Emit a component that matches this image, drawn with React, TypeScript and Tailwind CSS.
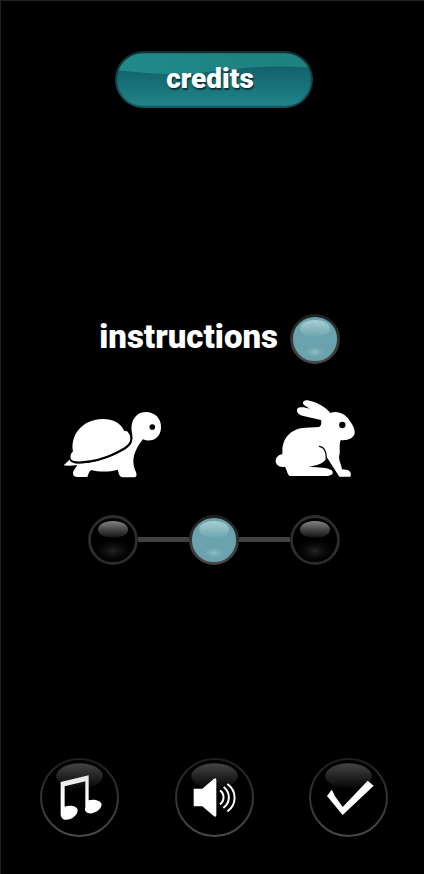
import { useState } from "react";
import type { ReactNode } from "react";

function OrbDefs() {
  return (
    <svg width="0" height="0" className="absolute" aria-hidden="true">
      <defs>
        <linearGradient id="rim" x1="0" y1="0" x2="0" y2="1">
          <stop offset="0" stopColor="#1f1f1f" />
          <stop offset="1" stopColor="#484848" />
        </linearGradient>
        <linearGradient id="shineOn" x1="0" y1="0" x2="0" y2="1">
          <stop offset="0" stopColor="#a9cdd2" />
          <stop offset="1" stopColor="#6ea6b0" />
        </linearGradient>
        <linearGradient id="shineOff" x1="0" y1="0" x2="0" y2="1">
          <stop offset="0" stopColor="#858585" />
          <stop offset="0.5" stopColor="#474747" />
          <stop offset="1" stopColor="#141414" />
        </linearGradient>
        <linearGradient id="shineButton" x1="0" y1="0" x2="0" y2="1">
          <stop offset="0" stopColor="#444444" />
          <stop offset="0.5" stopColor="#242424" />
          <stop offset="1" stopColor="#040404" />
        </linearGradient>
        <radialGradient id="glowOn">
          <stop offset="0" stopColor="#8fc0c6" />
          <stop offset="1" stopColor="#6aa2ad" stopOpacity="0" />
        </radialGradient>
        <radialGradient id="glowOff">
          <stop offset="0" stopColor="#242424" />
          <stop offset="1" stopColor="#080808" stopOpacity="0" />
        </radialGradient>
        <linearGradient id="noteFill" x1="0" y1="0" x2="0" y2="1">
          <stop offset="0" stopColor="#e4e4e4" />
          <stop offset="0.5" stopColor="#ffffff" />
        </linearGradient>
      </defs>
    </svg>
  );
}

function Orb({ on }: { on: boolean }) {
  return (
    <svg viewBox="0 0 50 50" className="block size-[50px]" aria-hidden="true">
      <circle cx="25" cy="25" r="23.5" fill={on ? "#6aa2ad" : "#000000"} stroke={on ? "url(#rim)" : "#2d2d2d"} strokeWidth="2.8" />
      <ellipse cx="25" cy={on ? 38 : 36} rx={on ? 13 : 20} ry={on ? 7 : 12} fill={on ? "url(#glowOn)" : "url(#glowOff)"} />
      <path
        d="M25 6C34 6 40 10 40 14.500C40 20 33.500 22.500 25 22.500S10 20 10 14.500C10 10 16 6 25 6Z"
        fill={on ? "url(#shineOn)" : "url(#shineOff)"}
      />
    </svg>
  );
}

function RoundButton({ label, children }: { label: string; children: ReactNode }) {
  return (
    <button type="button" aria-label={label} className="size-[79px] cursor-pointer rounded-full">
      <svg viewBox="16 16 237 237" className="block size-full" aria-hidden="true">
        <circle cx="134.500" cy="134.500" r="115.500" fill="#000000" stroke="url(#rim)" strokeWidth="6" />
        <ellipse cx="134.500" cy="70" rx="70" ry="38" fill="url(#shineButton)" />
        {children}
      </svg>
    </button>
  );
}

function Turtle() {
  return (
    <svg viewBox="24 24 300 246" className="h-[82px] w-[100px]" role="img" aria-label="slow">
      <g fill="#ffffff">
        <path d="M49 207C44 198 46 189 54 181C46 137 76 86 143 84C175 84 198 97 207 119C220 119 228 128 227 145C224 157 216 165 203 172C160 198 101 219 59 212C54 211 51 210 49 207Z" />
        <path d="M45 205L26 223C38 225 51 224 66 222C62 234 51 239 55 252C58 258 65 258 75 258H97C101 249 101 242 109 237C136 245 166 242 188 236C192 245 191 258 205 259H238C247 258 246 248 240 237C229 208 237 178 264 145C288 156 317 142 318 111C320 82 299 63 272 63C240 64 225 93 231 126C233 139 232 147 229 155C220 169 204 178 185 187C145 207 102 220 62 217C53 215 48 211 45 205Z" />
      </g>
      <path
        d="M46 206C51 215 62 215 80 214C114 212 148 203 178 189C206 176 228 164 229 145C230 134 226 126 220 120"
        fill="none"
        stroke="#000000"
        strokeWidth="6"
      />
      <circle cx="292" cy="108" r="8.500" fill="#000000" />
    </svg>
  );
}

function Rabbit() {
  return (
    <svg viewBox="30 24 270 246" className="h-[82px] w-[90px]" role="img" aria-label="fast">
      <path
        fill="#ffffff"
        d="M196 66C184 49 158 34 133 29C120 26 112 31 114 38C117 44 127 47 135 53C119 48 102 46 97 53C93 61 99 71 115 75L168 87C171 97 168 105 162 108L121 110C83 112 54 135 52 177V190C39 192 32 200 32 211C33 223 44 230 60 227C65 235 66 247 73 255H189L205 250L223 257H256C260 250 257 240 248 237L231 235C229 217 218 205 224 188C225 172 222 159 227 147C247 150 269 140 269 126C270 112 262 100 254 89C243 69 218 57 196 66Z"
      />
      <path d="M163 166C177 167 184 180 184 203" fill="none" stroke="#000000" strokeWidth="4" strokeLinecap="round" />
      <path d="M185 198C180 217 158 224 130 227C165 229 189 229 200 238C206 244 204 252 193 256V260H225Z" fill="#000000" />
      <circle cx="232" cy="102" r="9.500" fill="#000000" />
    </svg>
  );
}

const speeds = ["slow", "medium", "fast"];

export default function App() {
  const [instructions, setInstructions] = useState(true);
  const [speed, setSpeed] = useState("medium");

  return (
    <div className="flex min-h-screen flex-col items-center justify-between border-t border-l border-[#222222] bg-black pt-[50px] pb-[37px] pl-[3px] font-['Roboto',sans-serif] text-white">
      <OrbDefs />
      <button
        type="button"
        className="grid h-[57px] w-[198px] cursor-pointer place-items-center overflow-hidden rounded-full"
      >
        <svg viewBox="0 0 198 57" className="col-start-1 row-start-1 size-full" aria-hidden="true">
          <defs>
            <linearGradient id="pill" x1="0" y1="0" x2="0" y2="1">
              <stop offset="0.250" stopColor="#12606a" />
              <stop offset="1" stopColor="#208589" />
            </linearGradient>
            <linearGradient id="pillShine" x1="0" y1="0" x2="1" y2="0">
              <stop offset="0" stopColor="#208a8c" />
              <stop offset="1" stopColor="#1d807b" />
            </linearGradient>
            <linearGradient id="pillRim" x1="0" y1="0" x2="0" y2="1">
              <stop offset="0" stopColor="#123033" />
              <stop offset="1" stopColor="#15575c" />
            </linearGradient>
            <clipPath id="pillClip">
              <rect x="1" y="1" width="196" height="55" rx="27" />
            </clipPath>
          </defs>
          <rect x="1" y="1" width="196" height="55" rx="27" fill="url(#pill)" />
          <path clipPath="url(#pillClip)" d="M0 0H198V17C150 13 125 18 98 20C62 26 30 22 0 19Z" fill="url(#pillShine)" />
          <rect x="1" y="1" width="196" height="55" rx="27" fill="none" stroke="url(#pillRim)" strokeWidth="2.500" />
        </svg>
        <span className="col-start-1 row-start-1 pr-2 pb-0.5 text-[28px] leading-8 font-black [text-shadow:1px_2px_1px_#07363b]">
          credits
        </span>
      </button>

      <main className="flex w-full flex-col items-center pt-3">
        <label className="flex w-[252px] cursor-pointer items-center justify-end gap-3">
          <input
            type="checkbox"
            className="sr-only"
            checked={instructions}
            onChange={(e) => setInstructions(e.target.checked)}
          />
          <span className="pb-1 text-[33px] leading-10 font-black">instructions</span>
          <Orb on={instructions} />
        </label>

        <div className="mt-[35px] flex w-[302px] justify-between">
          <Turtle />
          <Rabbit />
        </div>

        <fieldset aria-label="speed" className="mt-[34px] flex w-[252px] items-center">
          {speeds.map((name, i) => (
            <div key={name} className={i === 0 ? "flex items-center" : "flex flex-1 items-center"}>
              {i > 0 && <div className="h-[5px] flex-1 bg-[#414141]" />}
              <label className="cursor-pointer">
                <input
                  type="radio"
                  name="speed"
                  aria-label={name}
                  className="sr-only"
                  checked={speed === name}
                  onChange={() => setSpeed(name)}
                />
                <Orb on={speed === name} />
              </label>
            </div>
          ))}
        </fieldset>
      </main>

      <footer className="flex w-full justify-between px-9">
        <RoundButton label="music">
          <path fill="url(#noteFill)" d="M78 88L162 68V143C175 138 199 142 201 155C201 171 179 184 163 182C153 180 149 173 152 163V86L90 101V162C105 156 128 160 129 172C129 190 107 203 91 201C81 199 77 190 78 180Z" />
        </RoundButton>
        <RoundButton label="sound">
          <path fill="#ffffff" d="M72 108H98L133 78Q140 75 140 82V188Q140 195 133 191L98 161H72Z" />
          <g fill="none" stroke="#ffffff" strokeWidth="6">
            <path d="M151 113C165 123 165 145 151 155" />
            <path d="M162 103C183 120 183 149 161 166" />
            <path d="M173 94C202 114 202 157 173 176" />
          </g>
        </RoundButton>
        <RoundButton label="confirm">
          <path fill="#ffffff" d="M70 130L84 111L90 122L93 129L117 163L192 84L210 99L117 187Z" />
        </RoundButton>
      </footer>
    </div>
  );
}
